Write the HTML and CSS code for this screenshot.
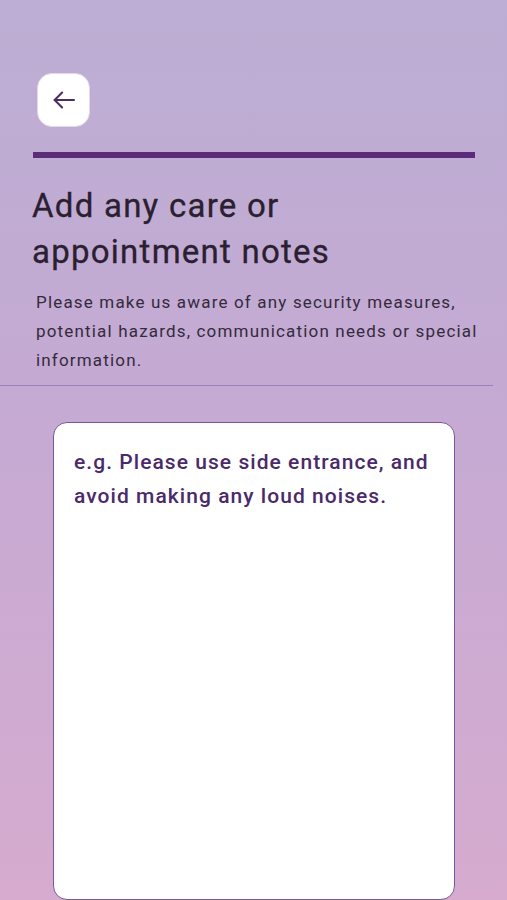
FILE: index.html
```html
<!DOCTYPE html>
<html lang="en">
<head>
<meta charset="utf-8">
<title>Care notes</title>
<link rel="stylesheet" href="styles.css">
</head>
<body>
<div class="screen">
  <div class="top">
    <button class="back" aria-label="Back">
      <svg width="30" height="30" viewBox="0 0 24 24" fill="none" stroke="#4a2c68" stroke-width="1.6" stroke-linecap="round" stroke-linejoin="round">
        <path d="M20 12H4.5"/>
        <path d="M10.5 6L4.5 12L10.5 18"/>
      </svg>
    </button>
    <div class="progress"></div>
    <h1 class="title">Add any care or<br>appointment notes</h1>
    <p class="desc">Please make us aware of any security measures, potential hazards, communication needs or special information.</p>
  </div>
  <div class="divider"></div>
  <div class="field">
    <textarea class="notes" placeholder="e.g. Please use side entrance, and avoid making any loud noises."></textarea>
  </div>
</div>
</body>
</html>
```

FILE: styles.css
```css
html, body {
  margin: 0;
  padding: 0;
}
body {
  font-family: Roboto, "Noto Sans", sans-serif;
}
.screen {
  width: 507px;
  height: 900px;
  overflow: hidden;
  background: linear-gradient(180deg, #bcaed4 0%, #c5aad3 45%, #d6abcf 100%);
  display: flex;
  flex-direction: column;
}
.top {
  padding: 73px 20px 0 32px;
  display: flex;
  flex-direction: column;
}
.back {
  width: 53px;
  height: 54px;
  margin-left: 5px;
  border: 1px solid #e2d8ea;
  border-radius: 15px;
  background: #ffffff;
  display: flex;
  align-items: center;
  justify-content: center;
  padding: 0;
}
.progress {
  margin-top: 25px;
  margin-left: 1px;
  height: 6px;
  width: 442px;
  background: #5a2c7a;
}
.title {
  margin: 25px 0 0 0;
  font-size: 33px;
  line-height: 46px;
  font-weight: 400;
  color: #2a2030;
  letter-spacing: 1.25px;
  -webkit-text-stroke: 0.3px #2a2030;
}
.desc {
  margin: 13px 0 0 4px;
  font-size: 17px;
  line-height: 29px;
  color: #352a3c;
  letter-spacing: 1.17px;
}
.divider {
  margin-top: 10px;
  width: 493px;
  height: 1px;
  background: #9a7fbe;
}
.field {
  margin-top: 36px;
  padding: 0 52px 0 53px;
  flex: 1;
  display: flex;
}
.notes {
  flex: 1;
  margin: 0;
  box-sizing: border-box;
  height: 478px;
  border: 1.5px solid #7a5898;
  border-radius: 14px;
  background: #ffffff;
  padding: 22px 20px;
  font-family: Roboto, "Noto Sans", sans-serif;
  font-size: 21px;
  line-height: 34px;
  font-weight: 500;
  color: #4a2a69;
  letter-spacing: 1.05px;
  resize: none;
  outline: none;
}
.notes::placeholder {
  color: #4a2a69;
  opacity: 1;
}
```
